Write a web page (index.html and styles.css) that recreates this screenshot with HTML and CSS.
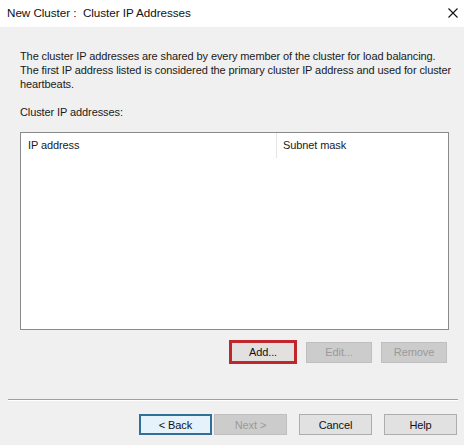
FILE: index.html
```html
<!DOCTYPE html>
<html>
<head>
<meta charset="utf-8">
<link rel="stylesheet" href="styles.css">
</head>
<body>
<div class="window">
  <div class="titlebar">
    <span class="title">New Cluster :&nbsp; Cluster IP Addresses</span>
    <svg class="close" width="10" height="10" viewBox="0 0 10 10"><path d="M0.5 0.5 L9.5 9.5 M9.5 0.5 L0.5 9.5" stroke="#111" stroke-width="1.1" fill="none"/></svg>
  </div>
  <div class="content">
    <p class="desc">The cluster IP addresses are shared by every member of the cluster for load balancing.<br>The first IP address listed is considered the primary cluster IP address and used for cluster<br>heartbeats.</p>
    <div class="label">Cluster IP addresses:</div>
    <div class="list">
      <div class="list-head">
        <div class="col col-ip">IP address</div>
        <div class="col col-mask">Subnet mask</div>
      </div>
    </div>
    <div class="list-buttons">
      <button class="btn btn-add">Add...</button>
      <button class="btn btn-small disabled">Edit...</button>
      <button class="btn btn-small disabled">Remove</button>
    </div>
  </div>
  <div class="separator"></div>
  <div class="footer">
    <button class="btn btn-nav default">&lt; Back</button>
    <button class="btn btn-nav disabled">Next &gt;</button>
    <button class="btn btn-nav gap">Cancel</button>
    <button class="btn btn-nav gap">Help</button>
  </div>
</div>
</body>
</html>
```
FILE: styles.css
```css
* { box-sizing: border-box; }
html, body { margin: 0; padding: 0; }
body {
  width: 464px;
  height: 445px;
  background: #f0f0f0;
  font-family: "Liberation Sans", Arial, sans-serif;
  font-size: 11px;
  letter-spacing: -0.1px;
  color: #1a1a1a;
  overflow: hidden;
}
.window { width: 464px; height: 445px; display: flex; flex-direction: column; }
.titlebar {
  height: 27px;
  background: #ffffff;
  display: flex;
  align-items: center;
  justify-content: space-between;
  padding: 0 6px 3px 7px;
}
.title { font-size: 11.7px; color: #111; letter-spacing: -0.05px; }
.close { margin-top: 2px; }
.content { padding: 0 15px 0 20px; }
.desc { margin: 22px 0 0 0; line-height: 14px; white-space: nowrap; }
.label { margin-top: 14px; line-height: 14px; }
.list {
  margin-top: 13px;
  height: 198px;
  width: 429px;
  background: #fff;
  border: 1px solid #8a8a8a;
}
.list-head { display: flex; height: 25px; }
.col { line-height: 25px; padding-left: 7px; }
.col-ip { width: 256px; border-right: 1px solid #e5e5e5; }
.col-mask { padding-left: 6px; }
.list-buttons {
  display: flex;
  justify-content: flex-end;
  align-items: center;
  gap: 9px;
  margin-top: 10px;
  padding-right: 2px;
  width: 429px;
  height: 24px;
}
.btn {
  font-family: inherit;
  font-size: 11px;
  letter-spacing: -0.1px;
  color: #111;
  background: #e1e1e1;
  border: 1px solid #adadad;
  padding: 0;
  margin: 0;
}
.btn-small { width: 66px; height: 21px; }
.btn-add { width: 68px; height: 24px; border: 3px solid #c0272d; background: #e3e0e0; }
.disabled { background: #cccccc; border-color: #bfbfbf; color: #9a9a9a; }
.separator {
  margin: 35px 6px 0 8px;
  height: 2px;
  border-top: 1px solid #a0a0a0;
  border-bottom: 1px solid #ffffff;
}
.footer {
  display: flex;
  justify-content: flex-end;
  gap: 2px;
  padding-right: 7px;
  margin-top: 13px;
}
.btn-nav { width: 73px; height: 21px; }
.gap { margin-left: 10px; }
.default { background: #e5f1fb; border: 2px solid #2f6f98; }
```
